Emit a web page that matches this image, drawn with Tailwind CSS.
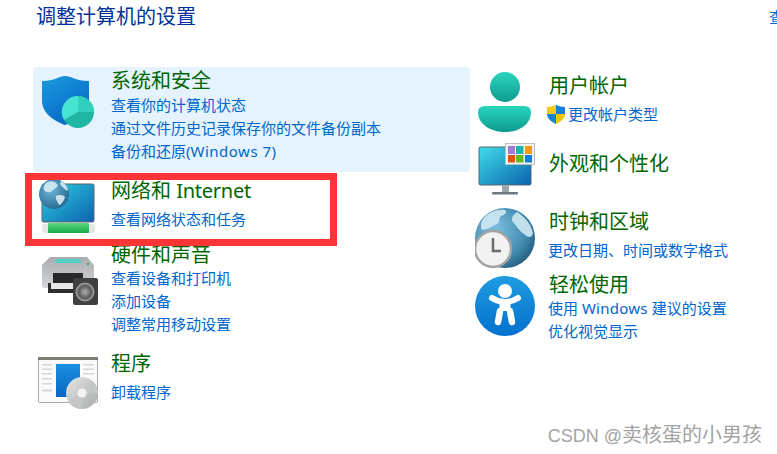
<!DOCTYPE html>
<html lang="zh-CN">
<head>
    <meta charset="UTF-8">
    <title>调整计算机的设置</title>
    <script src="https://cdn.jsdelivr.net/npm/@tailwindcss/browser@4"></script>
</head>
<body class="bg-white">
    <div class="relative w-[777px] h-[454px] overflow-hidden bg-white font-['Noto_Sans','Noto_Sans_CJK_SC',sans-serif]">
        <!-- Header -->
        <header class="flex justify-between h-[67px] pt-px">
            <h1 class="pl-[36px] text-[20px] leading-[32px] text-[#003399]">调整计算机的设置</h1>
            <span class="w-[8px] overflow-hidden whitespace-nowrap text-[15px] leading-[32px] text-[#0066cc]">查</span>
        </header>

        <main class="flex">
            <!-- Left column -->
            <div class="w-[437px] ml-[33px] shrink-0">
                <!-- System and security -->
                <section class="flex h-[105px] bg-[#e5f3fe] rounded-sm pt-px">
                    <div class="w-[78px] shrink-0 pl-[5px]">
                        <svg class="mt-[4px]" width="62" height="60" viewBox="38 72 62 60">
                            <defs>
                                <linearGradient id="sh" x1="0" y1="0" x2="0.6" y2="1"><stop offset="0" stop-color="#1d9be0"/><stop offset="1" stop-color="#0468c4"/></linearGradient>
                            </defs>
                            <path d="M65 76 C59 76 55 81 42 81 V101 C42 113 54 121 65 125 C76 121 89 113 89 101 V81 C76 81 71 76 65 76 Z" fill="url(#sh)"/>
                            <circle cx="78" cy="112" r="16" fill="#1fb6a4"/>
                            <path d="M78 112 V96 A16 16 0 0 0 64 120 Z" fill="#45e3d2"/>
                            <path d="M78 112 V96 A16 16 0 0 1 94 112 Z" fill="#30d0bd"/>
                        </svg>
                    </div>
                    <div>
                        <h2 class="text-[20px] leading-[26px] text-[#006600]">系统和安全</h2>
                        <p class="text-[15px] leading-[23px] text-[#0066cc]">查看你的计算机状态</p>
                        <p class="text-[15px] leading-[23px] text-[#0066cc]">通过文件历史记录保存你的文件备份副本</p>
                        <p class="text-[15px] leading-[23px] text-[#0066cc]">备份和还原(<span class="tracking-[0.5px]">Windows 7</span>)</p>
                    </div>
                </section>

                <!-- Network -->
                <section class="flex h-[68px] pt-[6px]">
                    <div class="w-[78px] shrink-0 pl-[5px]">
                        <svg width="62" height="60" viewBox="38 178 62 60">
                            <defs>
                                <linearGradient id="mon" x1="0" y1="0" x2="1" y2="1"><stop offset="0" stop-color="#2fd0e2"/><stop offset="1" stop-color="#0b62ae"/></linearGradient>
                                <radialGradient id="gl" cx="0.4" cy="0.35" r="0.75"><stop offset="0" stop-color="#6fb9dc"/><stop offset="1" stop-color="#1f5f86"/></radialGradient>
                                <linearGradient id="grn" x1="0" y1="0" x2="0" y2="1"><stop offset="0" stop-color="#5fd97a"/><stop offset="1" stop-color="#16a84a"/></linearGradient>
                            </defs>
                            <rect x="42" y="184" width="52" height="38" rx="1.5" fill="url(#mon)" stroke="#5a6470"/>
                            <rect x="42" y="224" width="53" height="9" rx="2.5" fill="#e4e6e6"/>
                            <rect x="48" y="223" width="41" height="10" rx="1" fill="url(#grn)"/>
                            <circle cx="54" cy="194" r="15" fill="url(#gl)"/>
                            <path d="M46 183 C50 180 55 181 57 184 C59 187 55 188 53 190 C51 193 46 193 44 190 C43 187 44 185 46 183 Z M56 196 C59 194 64 195 65 197 C64 201 61 205 59 205 C58 202 55 199 56 196 Z M61 181 C65 183 68 187 68 191 C65 190 62 187 60 184 Z" fill="#d4ecf3" opacity="0.9"/>
                        </svg>
                    </div>
                    <div>
                        <h2 class="text-[20px] leading-[25px] text-[#006600]">网络和 <span class="tracking-[-0.25px]">Internet</span></h2>
                        <p class="mt-[5px] text-[15px] leading-[23px] text-[#0066cc]">查看网络状态和任务</p>
                    </div>
                </section>

                <!-- Hardware -->
                <section class="flex h-[96px] pt-[2px]">
                    <div class="w-[78px] shrink-0 pl-[5px]">
                        <svg class="mt-[12px]" width="62" height="60" viewBox="38 254 62 60">
                            <defs>
                                <linearGradient id="pr" x1="0" y1="0" x2="0" y2="1"><stop offset="0" stop-color="#a9adb0"/><stop offset="1" stop-color="#d4d6d8"/></linearGradient>
                                <radialGradient id="spk"><stop offset="0" stop-color="#b0b0b0"/><stop offset="0.7" stop-color="#5a5a5a"/><stop offset="1" stop-color="#9a9a9a"/></radialGradient>
                            </defs>
                            <path d="M50 257 H87 L94 265 V285 Q94 288 91 288 H45 Q42 288 42 285 V265 Z" fill="url(#pr)"/>
                            <path d="M57 259 H80 L82 263 H55 Z" fill="#4fd2c4"/>
                            <rect x="87" y="263" width="2" height="2" fill="#35b34a"/>
                            <rect x="53" y="273" width="30" height="10" fill="#26282a"/>
                            <rect x="48" y="283" width="27" height="10" fill="#2c2e30"/>
                            <rect x="51" y="283" width="22" height="6" fill="#e8e8e8"/>
                            <rect x="73" y="278" width="25" height="27" rx="2" fill="#3f4042"/>
                            <circle cx="85" cy="292" r="9" fill="url(#spk)" stroke="#a6a6a6"/>
                        </svg>
                    </div>
                    <div>
                        <h2 class="text-[20px] leading-[25px] text-[#006600]">硬件和声音</h2>
                        <p class="text-[15px] leading-[23px] text-[#0066cc]">查看设备和打印机</p>
                        <p class="text-[15px] leading-[23px] text-[#0066cc]">添加设备</p>
                        <p class="text-[15px] leading-[23px] text-[#0066cc]">调整常用移动设置</p>
                    </div>
                </section>

                <!-- Programs -->
                <section class="flex pt-[15px]">
                    <div class="w-[78px] shrink-0 pl-[5px]">
                        <svg class="mt-[3px]" width="62" height="60" viewBox="38 354 62 60">
                            <defs>
                                <linearGradient id="doc" x1="0" y1="0" x2="0" y2="1"><stop offset="0" stop-color="#1a8fe0"/><stop offset="1" stop-color="#0867c2"/></linearGradient>
                                <linearGradient id="cd" x1="0" y1="0" x2="1" y2="1"><stop offset="0" stop-color="#e4e6e4"/><stop offset="1" stop-color="#a9abab"/></linearGradient>
                            </defs>
                            <rect x="38.5" y="357.5" width="59" height="45" rx="1.5" fill="#fafafa" stroke="#a8a8a8"/>
                            <rect x="38" y="357" width="60" height="3" fill="#7d7d78"/>
                            <g fill="#d6d6d6">
                                <rect x="42" y="364" width="10" height="1.5"/>
                                <rect x="42" y="368.5" width="10" height="1.5"/>
                                <rect x="42" y="373" width="10" height="1.5"/>
                                <rect x="42" y="378" width="10" height="1.5"/>
                                <rect x="42" y="383" width="10" height="1.5"/>
                                <rect x="42" y="389.5" width="10" height="2"/>
                                <rect x="83" y="364" width="11" height="1.5"/>
                                <rect x="83" y="368.5" width="11" height="1.5"/>
                                <rect x="83" y="373" width="11" height="1.5"/>
                            </g>
                            <rect x="56" y="364" width="24" height="33" fill="url(#doc)"/>
                            <circle cx="82" cy="393" r="16" fill="url(#cd)"/>
                            <path d="M82 393 L68 401 A16 16 0 0 0 82 409 Z M82 393 L98 393 A16 16 0 0 0 92 381 Z" fill="#c4c6c6"/>
                            <circle cx="82" cy="393" r="5" fill="#f2f2f2" stroke="#cfcfcf"/>
                        </svg>
                    </div>
                    <div>
                        <h2 class="text-[20px] leading-[25px] text-[#006600]">程序</h2>
                        <p class="mt-[5px] text-[15px] leading-[23px] text-[#0066cc]">卸载程序</p>
                    </div>
                </section>
            </div>

            <!-- Right column -->
            <div class="flex-1">
                <!-- Accounts -->
                <section class="flex h-[70px] pt-[5px]">
                    <div class="w-[79px] shrink-0 pl-[5px]">
                        <svg width="62" height="62" viewBox="475 72 62 62">
                            <defs>
                                <linearGradient id="usr" x1="0" y1="0" x2="0" y2="1"><stop offset="0" stop-color="#2bd5bd"/><stop offset="1" stop-color="#0d9c90"/></linearGradient>
                            </defs>
                            <circle cx="505" cy="87" r="15" fill="url(#usr)"/>
                            <path d="M485 106 H524 Q531 106 531 112 C531 124 520 132 505 132 C490 132 478 124 478 112 Q478 106 485 106 Z" fill="url(#usr)"/>
                        </svg>
                    </div>
                    <div class="pt-px">
                        <h2 class="text-[20px] leading-[25px] text-[#006600]">用户帐户</h2>
                        <div class="mt-[5px] flex items-center -ml-[2px] gap-[3px]">
                            <svg width="18" height="19" viewBox="547 105 18 19">
                                <path d="M556 105 C553 106 550 107 547 107 V114 H556 Z" fill="#f7c81a"/>
                                <path d="M556 105 C559 106 562 107 565 107 V114 H556 Z" fill="#1a7fd8"/>
                                <path d="M556 114 H565 C565 119 560 122 556 124 Z" fill="#f4c20d"/>
                                <path d="M556 114 H547 C547 119 552 122 556 124 Z" fill="#1a7fd8"/>
                            </svg>
                            <span class="text-[15px] leading-[23px] text-[#0066cc]">更改帐户类型</span>
                        </div>
                    </div>
                </section>

                <!-- Appearance -->
                <section class="flex h-[68px] pt-[6px]">
                    <div class="w-[79px] shrink-0 pl-[5px]">
                        <svg width="62" height="56" viewBox="475 143 62 56">
                            <defs>
                                <linearGradient id="mon2" x1="0" y1="0" x2="1" y2="1"><stop offset="0" stop-color="#3fdde8"/><stop offset="1" stop-color="#0b62ae"/></linearGradient>
                            </defs>
                            <rect x="479" y="147" width="52" height="38" rx="1.5" fill="url(#mon2)" stroke="#5a6470"/>
                            <rect x="502" y="185" width="7" height="7" fill="#9aa6ae"/>
                            <rect x="492" y="192" width="26" height="2.5" rx="1" fill="#6b7680"/>
                            <rect x="505.5" y="143.5" width="29" height="21" fill="#f4f4f4" stroke="#bdbdbd"/>
                            <rect x="508" y="146" width="7" height="8" fill="#a678d6"/>
                            <rect x="516" y="146" width="7.5" height="8" fill="#1fb6a4"/>
                            <rect x="525" y="146" width="7" height="8" fill="#f39a0e"/>
                            <rect x="508" y="155" width="7" height="7.5" fill="#e8500f"/>
                            <rect x="516" y="155" width="7.5" height="7.5" fill="#64b81c"/>
                            <rect x="525" y="155" width="7" height="7.5" fill="#0b7fd8"/>
                        </svg>
                    </div>
                    <h2 class="pt-[8px] text-[20px] leading-[25px] text-[#006600]">外观和个性化</h2>
                </section>

                <!-- Clock -->
                <section class="flex h-[68px] pt-[2px]">
                    <div class="w-[79px] shrink-0 pl-[5px]">
                        <svg width="62" height="62" viewBox="475 207 62 62">
                            <defs>
                                <radialGradient id="gl2" cx="0.35" cy="0.35" r="0.8"><stop offset="0" stop-color="#7cc0df"/><stop offset="0.65" stop-color="#3f88ad"/><stop offset="1" stop-color="#1b4d6b"/></radialGradient>
                            </defs>
                            <circle cx="505" cy="238" r="30" fill="url(#gl2)"/>
                            <path d="M484 218 C489 212 497 209 505 210 C508 212 505 215 501 216 C498 219 501 222 497 224 C492 226 488 230 482 230 C480 226 481 221 484 218 Z M517 212 C525 217 531 224 533 233 C532 238 528 238 524 234 C519 231 516 225 512 221 C511 217 514 214 517 212 Z" fill="#cfe8f2" opacity="0.9"/>
                            <circle cx="493" cy="249" r="18" fill="#f2f2f2" stroke="#a3a3a3" stroke-width="2.5"/>
                            <path d="M493 238 V251 H501" fill="none" stroke="#6b6b6b" stroke-width="2.5"/>
                        </svg>
                    </div>
                    <div>
                        <h2 class="pt-[2px] text-[20px] leading-[25px] text-[#006600]">时钟和区域</h2>
                        <p class="-ml-px mt-[5px] text-[15px] leading-[23px] text-[#0066cc]">更改日期、时间或数字格式</p>
                    </div>
                </section>

                <!-- Ease of access -->
                <section class="flex pt-[2px]">
                    <div class="w-[79px] shrink-0 pl-[5px]">
                        <svg width="62" height="62" viewBox="475 275 62 62">
                            <defs>
                                <linearGradient id="ease" x1="0" y1="0" x2="0" y2="1"><stop offset="0" stop-color="#1f9de2"/><stop offset="1" stop-color="#0570cc"/></linearGradient>
                            </defs>
                            <circle cx="505" cy="306" r="30" fill="url(#ease)"/>
                            <circle cx="505" cy="291" r="7" fill="#fff"/>
                            <path d="M492 298 Q505 306 518 298" fill="none" stroke="#fff" stroke-width="6" stroke-linecap="round"/>
                            <path d="M505 302 V311" fill="none" stroke="#fff" stroke-width="11"/>
                            <path d="M500 311 L498 322 M510 311 L512 322" fill="none" stroke="#fff" stroke-width="6.5" stroke-linecap="round"/>
                        </svg>
                    </div>
                    <div class="-mt-[3px]">
                        <h2 class="text-[20px] leading-[25px] text-[#006600]">轻松使用</h2>
                        <p class="-ml-px text-[15px] leading-[23px] text-[#0066cc]">使用 <span class="tracking-[0.25px]">Windows</span> 建议的设置</p>
                        <p class="-ml-px text-[15px] leading-[23px] text-[#0066cc]">优化视觉显示</p>
                    </div>
                </section>
            </div>
        </main>

        <!-- Annotation box over the network entry -->
        <div class="absolute left-[25px] top-[173px] w-[312px] h-[73px] border-[7px] border-[#fb3535]"></div>

        <!-- Watermark -->
        <div class="absolute right-[15px] top-[421px] text-[20px] leading-[28px] text-[#a3a3a3] font-['Liberation_Sans','Noto_Sans_CJK_SC',sans-serif]"><span class="text-[18px]">CSDN @</span>卖核蛋的小男孩</div>
    </div>
</body>
</html>
